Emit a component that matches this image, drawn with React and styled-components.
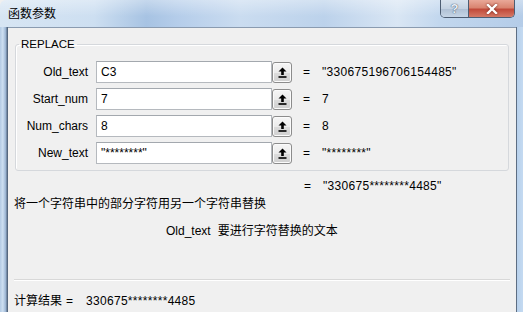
import React from "react";
import styled, { createGlobalStyle } from "styled-components";

const GlobalStyle = createGlobalStyle`
  html, body {
    margin: 0;
    padding: 0;
    background: #ffffff;
  }
  body {
    font-family: "Liberation Sans", "Noto Sans CJK SC", sans-serif;
    color: #000;
  }
`;

const args = [
  { name: "Old_text", value: "C3", result: "\"330675196706154485\"" },
  { name: "Start_num", value: "7", result: "7" },
  { name: "Num_chars", value: "8", result: "8" },
  { name: "New_text", value: "\"********\"", result: "\"********\"" },
];

export default function App() {
  return (
    <>
      <GlobalStyle />
      <Window>
        <TitleBar>
          <Title>函数参数</Title>
          <Controls>
            <HelpButton>?</HelpButton>
            <CloseButton>
              <svg width="14" height="10" viewBox="0 0 14 10">
                <path d="M3 1 L11 9 M11 1 L3 9" stroke="#fff" strokeWidth="2.4" strokeLinecap="square" />
              </svg>
            </CloseButton>
          </Controls>
        </TitleBar>
        <Frame>
          <SideFrame />
          <Client>
            <GroupBox>
              <Legend>REPLACE</Legend>
              <ArgGrid>
                {args.map((a) => (
                  <React.Fragment key={a.name}>
                    <ArgLabel>{a.name}</ArgLabel>
                    <TextBox>{a.value}</TextBox>
                    <PickButton>
                      <svg width="9" height="11" viewBox="0 0 9 11">
                        <path d="M4.5 0.5 L8.5 4.5 L5.8 4.5 L5.8 8 L3.2 8 L3.2 4.5 L0.5 4.5 Z" fill="#000" />
                        <rect x="0.5" y="9.2" width="8" height="1.6" fill="#000" />
                      </svg>
                    </PickButton>
                    <Eq>=</Eq>
                    <Value>{a.result}</Value>
                  </React.Fragment>
                ))}
              </ArgGrid>
            </GroupBox>
            <ResultLine>
              <Eq>=</Eq>
              <Value>"330675********4485"</Value>
            </ResultLine>
            <Description>将一个字符串中的部分字符用另一个字符串替换</Description>
            <ArgHelp>
              <span>Old_text</span>
              <span>要进行字符替换的文本</span>
            </ArgHelp>
            <Separator />
            <Footer>
              <span>计算结果</span>
              <FooterEq>=</FooterEq>
              <Value>330675********4485</Value>
            </Footer>
          </Client>
          <SideFrame $right />
        </Frame>
      </Window>
    </>
  );
}

const Window = styled.div`
  width: 523px;
  height: 312px;
  overflow: hidden;
  display: flex;
  flex-direction: column;
  background: #f0f0f0;
`;

const TitleBar = styled.div`
  height: 27px;
  flex: none;
  display: flex;
  justify-content: space-between;
  align-items: flex-start;
  padding: 0 8px 0 8px;
  box-sizing: border-box;
  border-top-left-radius: 6px;
  background:
    linear-gradient(180deg, rgba(255,255,255,0.35) 0%, rgba(255,255,255,0) 60%),
    linear-gradient(90deg, #d7e5f3 0%, #cddff1 18%, #a7c3e3 28%, #b5cdea 34%, #cadcf0 46%, #bcd2eb 62%, #d9e6f4 76%, #c2d7ee 84%, #b4cce8 100%);
`;

const Title = styled.div`
  font-family: "Noto Sans CJK SC", sans-serif;
  font-size: 12px;
  line-height: 14px;
  padding-top: 6px;
  color: #000;
`;

const Controls = styled.div`
  display: flex;
  height: 18px;
  border: 1px solid #4d5d72;
  border-top: none;
  border-radius: 0 0 5px 5px;
  overflow: hidden;
  box-sizing: border-box;
`;

const HelpButton = styled.div`
  width: 27px;
  display: flex;
  align-items: center;
  justify-content: center;
  font-size: 13px;
  font-weight: bold;
  color: #e8eef5;
  text-shadow: 0 0 1px #4a5a70, 0 0 1px #4a5a70;
  background: linear-gradient(180deg, #d9e3ee 0%, #c4d2e2 50%, #aebfd3 51%, #c6d5e6 100%);
  border-right: 1px solid #4d5d72;
`;

const CloseButton = styled.div`
  width: 45px;
  display: flex;
  align-items: center;
  justify-content: center;
  background: linear-gradient(180deg, #e9a898 0%, #d98470 45%, #c14a3a 55%, #d57966 100%);
  svg {
    filter: drop-shadow(0 0 1px #6b1f14);
  }
`;

const Frame = styled.div`
  flex: 1;
  display: flex;
  min-height: 0;
`;

const SideFrame = styled.div`
  width: ${(p) => (p.$right ? "7px" : "8px")};
  flex: none;
  background: ${(p) =>
    p.$right
      ? "linear-gradient(90deg, #5d6e83 0px, #5d6e83 1px, #b8d1ec 1px, #c4daf1 100%)"
      : "linear-gradient(90deg, #b3cae4 0%, #cddff1 35%, #9db6d4 70%, #5b6f88 90%, #4a5b70 100%)"};
`;

const Client = styled.div`
  flex: 1;
  display: flex;
  flex-direction: column;
  background: #f0f0f0;
  border-top: 1px solid #8a9bb0;
  font-size: 12px;
`;

const GroupBox = styled.fieldset`
  margin: 9px 7px 0 7px;
  padding: 0 0 6px 0;
  border: 1px solid #d5d8dc;
  border-radius: 3px;
  box-shadow: inset 1px 1px 0 #ffffff;
  min-width: 0;
`;

const Legend = styled.legend`
  font-size: 11.5px;
  line-height: 14px;
  padding: 0 2px;
  margin-left: 3px;
`;

const ArgGrid = styled.div`
  display: grid;
  grid-template-columns: 80px 176px 20px 30px 1fr;
  grid-auto-rows: 22px;
  row-gap: 5px;
  align-items: center;
  margin-top: 10px;
`;

const ArgLabel = styled.div`
  text-align: right;
  padding-right: 8px;
  font-size: 12px;
`;

const TextBox = styled.div`
  height: 22px;
  box-sizing: border-box;
  background: #ffffff;
  border: 1px solid #b5b9be;
  border-top-color: #a3a8ae;
  padding-left: 4px;
  line-height: 20px;
  font-size: 12px;
`;

const PickButton = styled.div`
  width: 20px;
  height: 21px;
  box-sizing: border-box;
  display: flex;
  align-items: center;
  justify-content: center;
  border: 1px solid #8c8c8c;
  border-radius: 3px;
  background: linear-gradient(180deg, #f6f6f6 0%, #ebebeb 50%, #dcdcdc 51%, #cfcfcf 100%);
  box-shadow: inset 0 0 0 1px #fbfbfb;
`;

const Eq = styled.span`
  padding-left: 11px;
`;

const Value = styled.span`
  letter-spacing: 0.3px;
  white-space: pre;
`;

const ResultLine = styled.div`
  display: flex;
  margin: 8px 0 0 285px;
  line-height: 14px;
  & > ${Eq} {
    width: 30px;
    box-sizing: border-box;
  }
`;

const Description = styled.div`
  margin: 3px 0 0 6px;
  line-height: 14px;
  font-family: "Noto Sans CJK SC", sans-serif;
`;

const ArgHelp = styled.div`
  display: flex;
  gap: 7px;
  margin: 14px 0 0 158px;
  line-height: 14px;
`;

const Separator = styled.div`
  margin: auto 6px 0 6px;
  border-top: 1px solid #d8d8d8;
  border-bottom: 1px solid #ffffff;
`;

const Footer = styled.div`
  display: flex;
  align-items: center;
  margin: 13px 0 4px 6px;
  line-height: 14px;
`;

const FooterEq = styled.span`
  margin: 0 13px 0 4px;
`;
